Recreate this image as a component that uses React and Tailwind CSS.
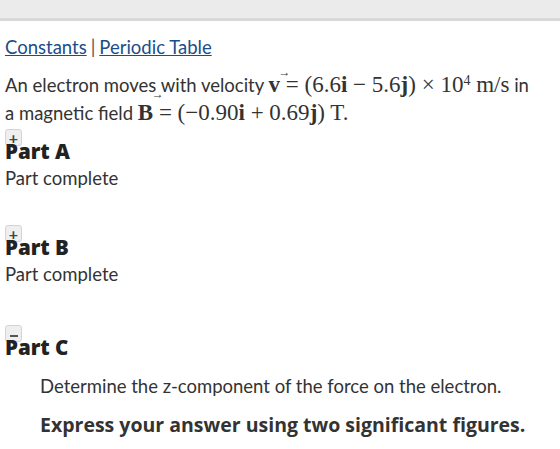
import React from 'react';

const sans = { fontFamily: 'Lato, "Open Sans", sans-serif' };
const heavy = { fontFamily: '"Open Sans", Lato, sans-serif' };
const math = { fontFamily: '"Liberation Serif", "DejaVu Serif", serif' };

// bold vector symbol with its small arrow set just right of the letter
function Vec({ children, arrow }) {
  return (
    <span className="relative inline-block font-bold">
      <span className={`absolute text-[12px] font-normal leading-none ${arrow}`}>&rarr;</span>
      {children}
    </span>
  );
}

function Toggle({ open }) {
  return (
    <div className="relative z-0 flex h-[17px] w-[17px] items-center justify-center rounded-[3px] border border-[#d4d4d4] bg-[#efefef] text-[#444]">
      {open ? (
        <span className="mt-[4px] block h-[2px] w-[8px] bg-[#555]" />
      ) : (
        <span className="text-[16px] font-bold leading-none">+</span>
      )}
    </div>
  );
}

function Part({ label, open, complete }) {
  return (
    <div>
      <div className="ml-[5px]">
        <Toggle open={open} />
      </div>
      <h3 className="relative z-10 -mt-[6px] ml-[5px] text-[20.5px] font-extrabold leading-[22px] text-[#222]" style={heavy}>
        Part {label}
      </h3>
      {complete && <p className="ml-[5px] mt-[4px] text-[18.5px] leading-[24px] text-[#333]">Part complete</p>}
    </div>
  );
}

export default function App() {
  return (
    <div className="min-h-[449px] w-[560px] bg-white" style={sans}>
      <div className="h-[18px] bg-[#ebebeb]" />
      <div className="h-[3px] bg-[#d8d8d8]" />

      <div className="ml-[5px] mt-[14px] text-[18.5px] leading-[24px] text-[#333]">
        <a href="#" className="text-[#1b4d8c] underline">Constants</a>
        <span className="mx-[4px] text-[#555]">|</span>
        <a href="#" className="text-[#1b4d8c] underline">Periodic Table</a>
      </div>

      <p className="ml-[5px] mt-[12px] text-[18.5px] leading-[28px] text-[#333]">
        An electron moves with velocity{' '}
        <span className="text-[23px]" style={math}>
          <Vec arrow="left-[10px] -top-[5px]">v</Vec> = (6.6<b>i</b> &minus; 5.6<b>j</b>) &times; 10
          <sup className="text-[14px]">4</sup> m/s
        </span>{' '}
        in
        <br />
        a magnetic field{' '}
        <span className="text-[23px]" style={math}>
          <Vec arrow="left-[14px] -top-[11px]">B</Vec> = (&minus;0.90<b>i</b> + 0.69<b>j</b>) T.
        </span>
      </p>

      <div className="mt-[2px] flex flex-col gap-[35px]">
        <Part label="A" complete />
        <Part label="B" complete />
      </div>
      <div className="mt-[39px]">
        <Part label="C" open />
      </div>

      <div className="ml-[40px] mt-[16px] text-[#333]">
        <p className="text-[18.5px] leading-[24px]">Determine the z-component of the force on the electron.</p>
        <p className="mt-[15px] text-[19.5px] font-bold leading-[24px]" style={heavy}>
          Express your answer using two significant figures.
        </p>
      </div>
    </div>
  );
}
